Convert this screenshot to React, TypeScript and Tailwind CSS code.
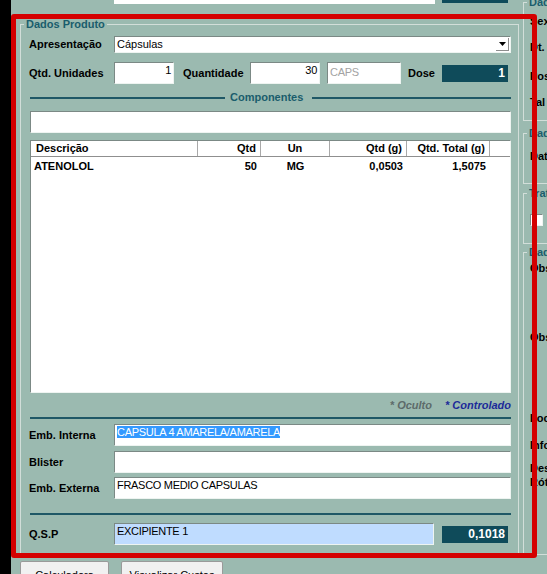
import React from 'react';

type FieldProps = {
  className?: string;
  tone?: 'white' | 'blue';
  align?: 'left' | 'right';
  children?: React.ReactNode;
};

// campo "afundado" estilo Windows clássico
function Field({ className = '', tone = 'white', align = 'left', children }: FieldProps) {
  const bg = tone === 'blue' ? 'bg-[#bfdcff]' : 'bg-white';
  const al = align === 'right' ? 'text-right' : 'text-left';
  return (
    <div
      className={`h-[22px] shrink-0 ${bg} ${al} border border-t-[#7b8985] border-l-[#7b8985] border-b-[#eef4f1] border-r-[#eef4f1] px-[2px] pt-[1px] text-[11px] leading-[13px] tracking-[-0.3px] whitespace-nowrap overflow-hidden ${className}`}
    >
      {children}
    </div>
  );
}

function Label({ className = 'w-[85px]', children }: { className?: string; children: React.ReactNode }) {
  return <span className={`shrink-0 text-[11px] leading-[13px] font-bold ${className}`}>{children}</span>;
}

function DarkValue({ children }: { children: React.ReactNode }) {
  return (
    <div className="w-[66px] h-[17px] shrink-0 bg-[#0f4b5a] text-white text-right pr-[3px] text-[12px] leading-[17px] font-bold">
      {children}
    </div>
  );
}

const cols = 'grid grid-cols-[167px_63px_69px_77px_83px_1fr]';

export default function App() {
  return (
    <div className="relative w-[547px] h-[574px] overflow-hidden bg-[#9bbab0] flex font-['Liberation_Sans',Arial,sans-serif] text-black">
      <div className="w-[11px] shrink-0 bg-black" />

      {/* coluna central */}
      <div className="w-[510px] shrink-0 flex flex-col">
        <div className="flex h-[4px] shrink-0">
          <div className="ml-[103px] w-[321px] h-[4px] bg-white" />
          <div className="ml-[7px] w-[66px] h-[3px] bg-[#0f4b5a]" />
        </div>

        <fieldset className="mt-[14px] ml-[9px] w-[499px] h-[536px] shrink-0 border border-[#d2ded9] pl-[3px] pr-[7px]">
          <legend className="px-[2px] text-[11px] leading-[13px] font-bold text-[#1a5d6c]">Dados Produto</legend>
          <div className="pl-[5px] flex flex-col">
            {/* Apresentação */}
            <div className="mt-[5px] h-[17px] flex items-center">
              <Label>Apresentação</Label>
              <div className="w-[397px] h-[17px] bg-white border border-t-[#7b8985] border-l-[#7b8985] border-b-[#eef4f1] border-r-[#eef4f1] flex items-center">
                <span className="flex-1 pl-[2px] text-[11px] leading-[13px]">Cápsulas</span>
                <div className="w-[13px] h-[13px] mr-[1px] bg-white border-r border-b border-[#8d8d8d] flex items-center justify-center">
                  <svg width="7" height="4" viewBox="0 0 7 4">
                    <polygon points="0,0 7,0 3.5,4" fill="#000" />
                  </svg>
                </div>
              </div>
            </div>

            {/* Qtd. Unidades */}
            <div className="mt-[9px] h-[22px] flex items-center">
              <Label>Qtd. Unidades</Label>
              <Field className="w-[60px]" align="right">1</Field>
              <Label className="ml-[9px] w-[67px]">Quantidade</Label>
              <Field className="w-[70px]" align="right">30</Field>
              <Field className="ml-[7px] w-[74px] pt-[3px] text-[#a3a3a3]">CAPS</Field>
              <Label className="ml-[7px] w-[34px]">Dose</Label>
              <DarkValue>1</DarkValue>
            </div>

            {/* Componentes */}
            <div className="mt-[7px] ml-[1px] h-[13px] flex items-center">
              <div className="w-[195px] h-[2px] bg-[#1f5866]" />
              <span className="ml-[5px] text-[11px] leading-[13px] font-bold text-[#1a5d6c]">Componentes</span>
              <div className="ml-[9px] flex-1 h-[2px] bg-[#1f5866]" />
            </div>

            <Field className="mt-[7px] ml-[1px] w-[481px]" />

            {/* grade */}
            <div className="mt-[7px] ml-[1px] w-[481px] h-[253px] shrink-0 bg-white border border-t-[#7b8985] border-l-[#7b8985] border-b-[#eef4f1] border-r-[#eef4f1] flex flex-col text-[11px] leading-[13px] font-bold">
              <div className={`${cols} h-[16px] border-b border-[#8f8f8f]`}>
                <div className="border-r border-[#a9a9a9] pl-[5px] flex items-center">Descrição</div>
                <div className="border-r border-[#a9a9a9] pr-[4px] flex items-center justify-end">Qtd</div>
                <div className="border-r border-[#a9a9a9] flex items-center justify-center">Un</div>
                <div className="border-r border-[#a9a9a9] pr-[4px] flex items-center justify-end">Qtd (g)</div>
                <div className="border-r border-[#a9a9a9] pr-[4px] flex items-center justify-end">Qtd. Total (g)</div>
                <div />
              </div>
              <div className={`${cols} h-[18px] items-center`}>
                <div className="pl-[3px]">ATENOLOL</div>
                <div className="text-right pr-[4px]">50</div>
                <div className="text-center">MG</div>
                <div className="text-right pr-[4px]">0,0503</div>
                <div className="text-right pr-[4px]">1,5075</div>
                <div />
              </div>
            </div>

            <div className="mt-[6px] h-[12px] flex justify-end gap-[13px] text-[11px] leading-[12px] font-bold italic">
              <span className="text-[#5d6b6a]">* Oculto</span>
              <span className="text-[#1b2a99]">* Controlado</span>
            </div>

            <div className="mt-[6px] ml-[1px] h-[2px] bg-[#1f5866]" />

            <div className="mt-[5px] flex items-center">
              <Label>Emb. Interna</Label>
              <Field className="w-[397px]">
                <span className="bg-[#3399ff] text-white">CAPSULA 4 AMARELA/AMARELA</span>
              </Field>
            </div>
            <div className="mt-[5px] flex items-center">
              <Label>Blister</Label>
              <Field className="w-[397px]" />
            </div>
            <div className="mt-[4px] flex items-center">
              <Label>Emb. Externa</Label>
              <Field className="w-[397px]">FRASCO MEDIO CAPSULAS</Field>
            </div>

            <div className="mt-[14px] ml-[1px] h-[2px] bg-[#1f5866]" />

            <div className="mt-[8px] flex items-center">
              <Label>Q.S.P</Label>
              <Field className="w-[320px]" tone="blue">EXCIPIENTE 1</Field>
              <div className="ml-[8px]">
                <DarkValue>0,1018</DarkValue>
              </div>
            </div>
          </div>
        </fieldset>

        <div className="mt-[7px] ml-[9px] flex gap-[12px] shrink-0">
          <button className="w-[89px] h-[24px] bg-[#f1f1f1] border border-[#9a9a9a] rounded-[2px] pt-[4px] text-[11px] leading-[13px]">
            Calculadora
          </button>
          <button className="w-[102px] h-[24px] bg-[#f1f1f1] border border-[#9a9a9a] rounded-[2px] pt-[4px] text-[11px] leading-[13px]">
            Visualizar Custos
          </button>
        </div>
      </div>

      {/* painel da direita (cortado) */}
      <div className="w-[26px] shrink-0 overflow-hidden">
        <div className="w-[200px] flex flex-col text-[11px] leading-[13px] font-bold">
          <fieldset className="-mt-[4px] ml-[2px] h-[125px] shrink-0 border border-[#d2ded9] pl-[3px]">
            <legend className="px-[2px] text-[#1a5d6c]">Dados do Paciente</legend>
            <div className="pl-[3px] flex flex-col">
              <span className="mt-[6px]">Sexo</span>
              <span className="mt-[13px]">Dt. Nasc.</span>
              <span className="mt-[16px]">Posologia</span>
              <span className="mt-[13px]">Tal</span>
            </div>
          </fieldset>
          <fieldset className="mt-[6px] ml-[2px] h-[57px] shrink-0 border border-[#d2ded9] pl-[3px]">
            <legend className="px-[2px] text-[#1a5d6c]">Dados Entrega</legend>
            <div className="pl-[3px] flex flex-col">
              <span className="mt-[10px]">Data</span>
            </div>
          </fieldset>
          <fieldset className="mt-[3px] ml-[2px] h-[57px] shrink-0 border border-[#d2ded9] pl-[3px]">
            <legend className="px-[2px] text-[#1a5d6c]">Tratamento</legend>
            <div className="pl-[3px] flex flex-col">
              <div className="mt-[14px] w-[13px] h-[12px] bg-white border border-t-[#7b8985] border-l-[#7b8985] border-b-[#eef4f1] border-r-[#eef4f1]" />
            </div>
          </fieldset>
          <fieldset className="mt-[2px] ml-[2px] h-[309px] shrink-0 border border-[#d2ded9] pl-[3px]">
            <legend className="px-[2px] text-[#1a5d6c]">Dados Adicionais</legend>
            <div className="pl-[3px] flex flex-col">
              <span className="mt-[3px]">Obs. Rótulo</span>
              <span className="mt-[56px]">Obs. Interna</span>
              <span className="mt-[68px]">Local</span>
              <span className="mt-[14px]">Informações</span>
              <span className="mt-[10px]">Descrição</span>
              <span className="mt-[1px]">Rótulo</span>
            </div>
          </fieldset>
        </div>
      </div>

      {/* marcação vermelha por cima */}
      <div className="pointer-events-none absolute left-[11px] top-[14px] w-[526px] h-[544px] border-[5px] border-[#d40000] rounded-[3px]" />
    </div>
  );
}
